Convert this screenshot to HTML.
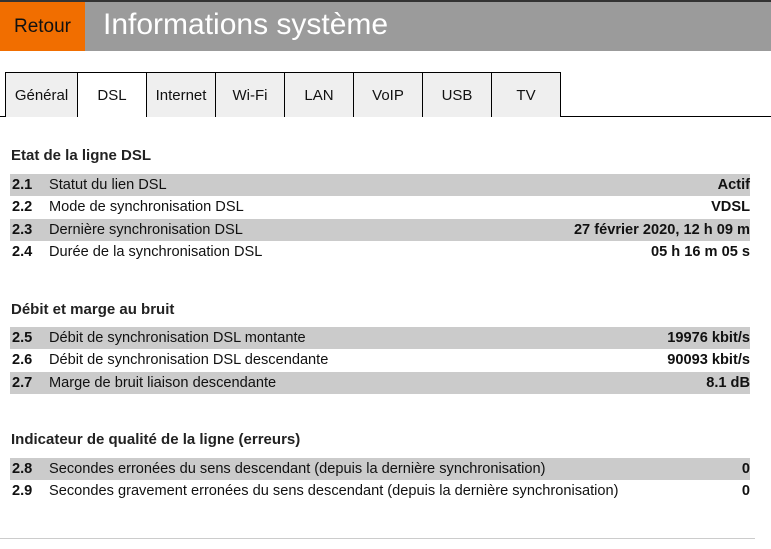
<!DOCTYPE html>
<html><head><meta charset="utf-8"><style>
*{margin:0;padding:0;box-sizing:border-box}
body{width:771px;height:549px;background:#fff;font-family:"Liberation Sans",Arial,sans-serif;color:#000;position:relative;overflow:hidden}
.top{position:absolute;left:0;top:0;width:771px;height:2px;background:#333}
.hdr{position:absolute;left:0;top:2px;width:771px;height:49px;background:#9b9b9b}
.ret{position:absolute;left:0;top:2px;width:85px;height:49px;background:#f16e00;font-size:19px;line-height:49px;text-align:center;color:#111}
.ttl{position:absolute;left:103px;top:2px;height:49px;line-height:45px;font-size:30px;color:#fff}
.tab{position:absolute;top:72px;height:45px;border:1px solid #000;border-right:none;border-bottom:none;background:#efefef;font-size:15px;text-align:center;line-height:46px;color:#111}
.tab.a{background:#fff}
.line{position:absolute;top:116px;height:1px;background:#000}
h3{position:absolute;left:11px;font-size:15px;font-weight:bold;color:#222}
.row{position:absolute;left:10px;width:740px;height:22px;font-size:14.6px;line-height:23px;color:#111}
.row.g{background:#cbcbcb}
.row b{position:absolute;left:2px}
.row span{position:absolute;left:39px}
.row i{position:absolute;right:0;font-style:normal;font-weight:bold}
.bot{position:absolute;left:0;top:538px;width:755px;height:1px;background:#ccc}
</style></head><body>
<div class="top"></div>
<div class="hdr"></div>
<div class="ret">Retour</div>
<div class="ttl">Informations système</div>

<div class="tab" style="left:5px;width:72px">Général</div>
<div class="tab a" style="left:77px;width:69px">DSL</div>
<div class="tab" style="left:146px;width:69px">Internet</div>
<div class="tab" style="left:215px;width:69px">Wi-Fi</div>
<div class="tab" style="left:284px;width:69px">LAN</div>
<div class="tab" style="left:353px;width:69px">VoIP</div>
<div class="tab" style="left:422px;width:69px">USB</div>
<div class="tab" style="left:491px;width:70px;border-right:1px solid #000">TV</div>
<div class="line" style="left:0;width:6px"></div>
<div class="line" style="left:560px;width:211px"></div>

<h3 style="top:147px">Etat de la ligne DSL</h3>
<div class="row g" style="top:174px"><b>2.1</b><span>Statut du lien DSL</span><i>Actif</i></div>
<div class="row" style="top:196px"><b>2.2</b><span>Mode de synchronisation DSL</span><i>VDSL</i></div>
<div class="row g" style="top:219px"><b>2.3</b><span>Dernière synchronisation DSL</span><i>27 février 2020, 12 h 09 m</i></div>
<div class="row" style="top:241px"><b>2.4</b><span>Durée de la synchronisation DSL</span><i>05 h 16 m 05 s</i></div>

<h3 style="top:301px">Débit et marge au bruit</h3>
<div class="row g" style="top:327px"><b>2.5</b><span>Débit de synchronisation DSL montante</span><i>19976 kbit/s</i></div>
<div class="row" style="top:349px"><b>2.6</b><span>Débit de synchronisation DSL descendante</span><i>90093 kbit/s</i></div>
<div class="row g" style="top:372px"><b>2.7</b><span>Marge de bruit liaison descendante</span><i>8.1 dB</i></div>

<h3 style="top:431px">Indicateur de qualité de la ligne (erreurs)</h3>
<div class="row g" style="top:458px"><b>2.8</b><span>Secondes erronées du sens descendant (depuis la dernière synchronisation)</span><i>0</i></div>
<div class="row" style="top:480px"><b>2.9</b><span>Secondes gravement erronées du sens descendant (depuis la dernière synchronisation)</span><i>0</i></div>

<div class="bot"></div>
</body></html>
